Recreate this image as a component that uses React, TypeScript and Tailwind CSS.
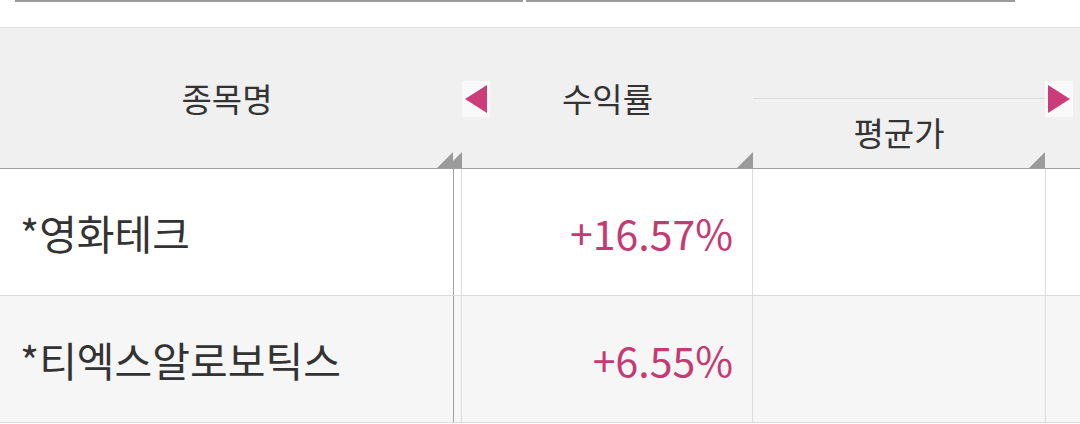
import React from 'react';

const rows = [
  { name: '*영화테크', rate: '+16.57%', bg: 'bg-white' },
  { name: '*티엑스알로보틱스', rate: '+6.55%', bg: 'bg-[#f6f6f6]' },
];

const Corner: React.FC<{ double?: boolean }> = ({ double }) => (
  <svg
    className="absolute right-0 bottom-0"
    width={double ? 25 : 16}
    height={16}
    viewBox={double ? '0 0 25 16' : '0 0 16 16'}
  >
    {double ? (
      <>
        <polygon points="0,16 16,0 16,16" fill="#9b9b9b" />
        <polygon points="9,16 25,0 25,16" fill="#9b9b9b" />
      </>
    ) : (
      <polygon points="0,16 16,0 16,16" fill="#9b9b9b" />
    )}
  </svg>
);

const Arrow: React.FC<{ dir: 'left' | 'right' }> = ({ dir }) => (
  <div className="w-[28px] h-[36px] bg-white/60 flex items-center justify-center">
    <svg width="22" height="28" viewBox="0 0 22 28">
      {dir === 'left' ? (
        <polygon points="22,0 22,28 0,14" fill="#cc3c79" />
      ) : (
        <polygon points="0,0 0,28 22,14" fill="#cc3c79" />
      )}
    </svg>
  </div>
);

export default function App() {
  return (
    <div
      className="w-[1080px] h-[424px] bg-white overflow-hidden text-[#333]"
      style={{ fontFamily: '"Noto Sans CJK KR", "Noto Sans", sans-serif' }}
    >
      {/* previous section edge */}
      <div className="h-[27px] flex items-start">
        <div className="ml-[15px] w-[508px] h-[2px] bg-[#9a9a9a]" />
        <div className="ml-[3px] w-[489px] h-[2px] bg-[#9a9a9a]" />
      </div>

      {/* header */}
      <div className="h-[142px] flex bg-[#f0f0f0] border-t border-[#e6e6e6] border-b border-b-[#a0a0a0]">
        <div className="relative w-[462px] flex items-center justify-center">
          <span className="text-[33px] leading-none pr-[8px]">종목명</span>
          <Corner double />
        </div>
        <div className="relative w-[291px] flex items-center justify-center">
          <div className="absolute left-0 top-[53px]">
            <Arrow dir="left" />
          </div>
          <span className="text-[33px] leading-none">수익률</span>
          <Corner />
        </div>
        <div className="relative w-[292px] flex flex-col">
          <div className="h-[71px] border-b border-[#dcdcdc]" />
          <div className="flex-1 flex items-center justify-center pb-[2px]">
            <span className="text-[33px] leading-none">평균가</span>
          </div>
          <Corner />
        </div>
        <div className="flex-1 flex flex-col">
          <div className="h-[71px] w-[25px] border-b border-[#dcdcdc] relative">
            <div className="absolute left-0 top-[53px]">
              <Arrow dir="right" />
            </div>
          </div>
        </div>
      </div>

      {/* body */}
      {rows.map((r) => (
        <div key={r.name} className={`h-[127px] flex border-b border-[#dcdcdc] ${r.bg}`}>
          <div className="w-[454px] border-r border-[#a0a0a0] flex items-center pl-[20px]">
            <span className="text-[41px] leading-none">{r.name}</span>
          </div>
          <div className="w-[8px] border-r border-[#dcdcdc]" />
          <div className="w-[291px] border-r border-[#dcdcdc] flex items-center justify-end pr-[19px]">
            <span className="text-[41px] leading-none text-[#c43a72]">{r.rate}</span>
          </div>
          <div className="w-[293px] border-r border-[#dcdcdc]" />
          <div className="flex-1" />
        </div>
      ))}
    </div>
  );
}
